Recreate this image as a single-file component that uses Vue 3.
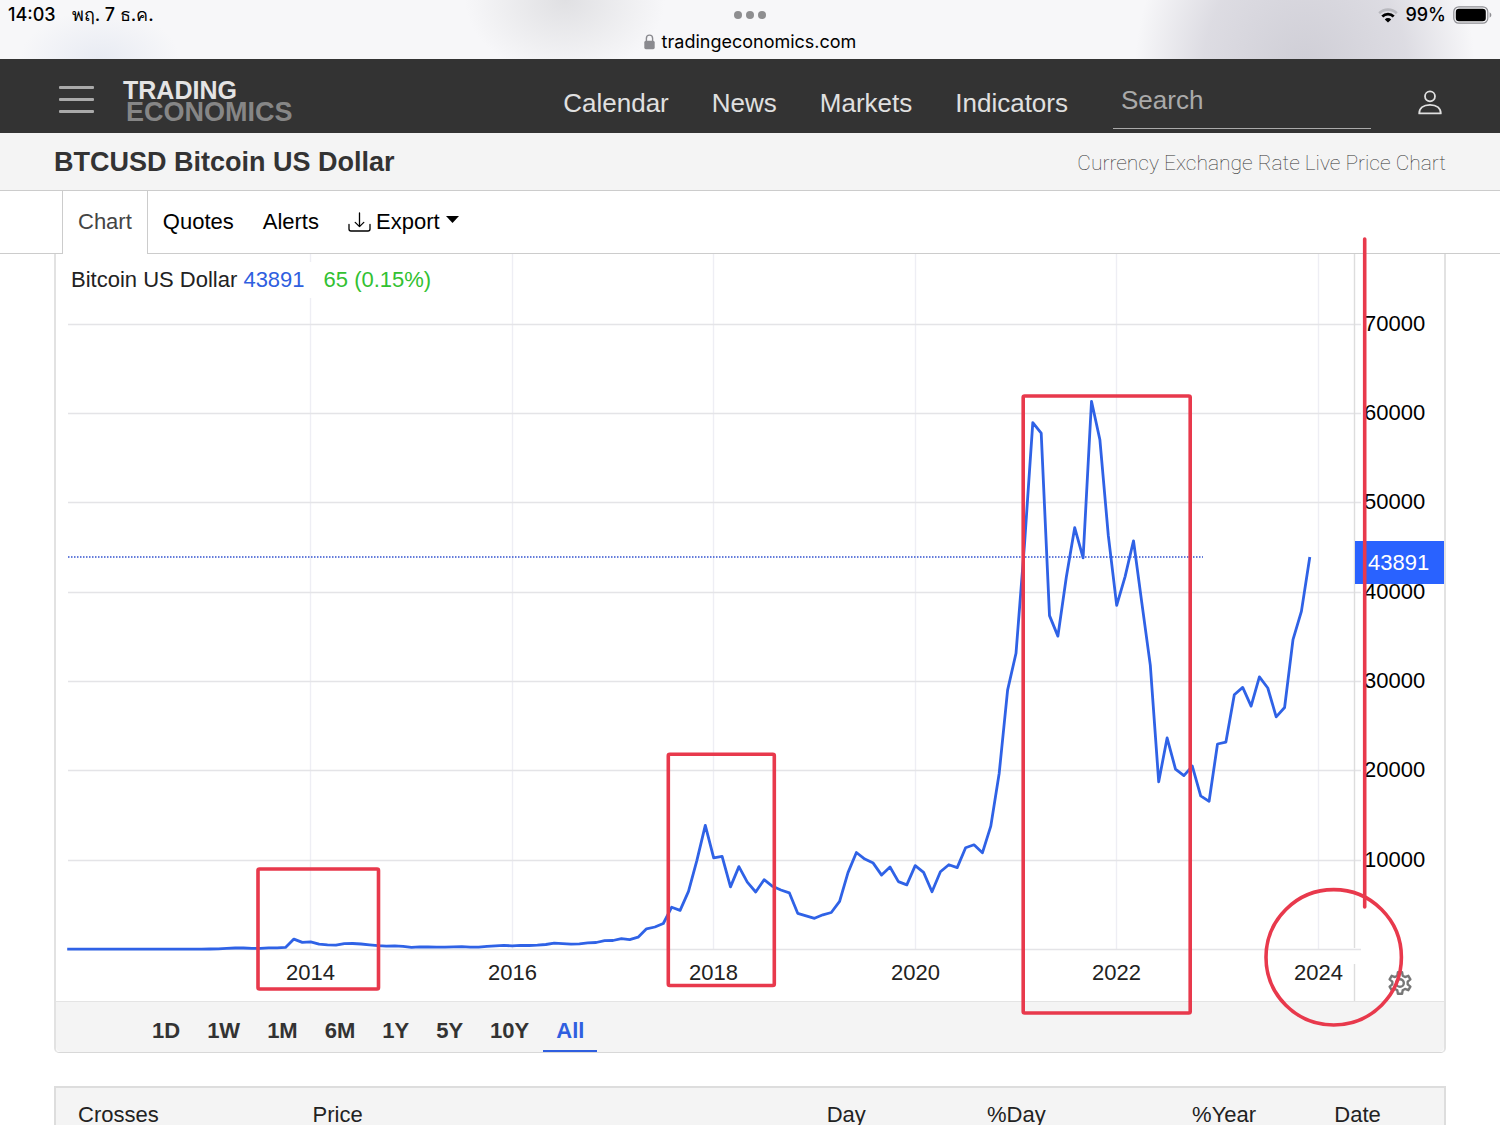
<template>
  <div class="page">
    <!-- Device status -->
    <div class="status">
      <div class="status-row">
        <div class="status-left">
          <span>14:03</span>
          <span>พฤ. 7 ธ.ค.</span>
        </div>
        <div class="dots"><i></i><i></i><i></i></div>
        <div class="status-right">
          <svg width="20" height="15" viewBox="0 0 20 15" fill="none">
            <path d="M1.2 5.2a12.6 12.6 0 0 1 17.6 0" stroke="#b9b9bf" stroke-width="2.6"/>
            <path d="M4.3 8.4a8.2 8.2 0 0 1 11.4 0" stroke="#000" stroke-width="2.8"/>
            <path d="M10 14.6l-3.2-3.2a4.6 4.6 0 0 1 6.4 0z" fill="#000"/>
          </svg>
          <span>99%</span>
          <svg width="39" height="18" viewBox="0 0 39 18">
            <rect x=".8" y=".8" width="34" height="16.4" rx="5" fill="none" stroke="#8e8e93" stroke-width="1.2"/>
            <rect x="2.8" y="2.8" width="30" height="12.4" rx="3.2" fill="#000"/>
            <path d="M36.6 6.2q1.8 1 1.8 2.8t-1.8 2.8z" fill="#8e8e93"/>
          </svg>
        </div>
      </div>
      <div class="address">
        <svg width="11" height="16" viewBox="0 0 11 16">
          <path d="M2.4 7.5V4.2a3.1 3.1 0 0 1 6.2 0v3.3" fill="none" stroke="#8a8a8f" stroke-width="1.4"/>
          <rect x=".3" y="6.8" width="10.4" height="8.4" rx="1.6" fill="#8a8a8f"/>
        </svg>
        <span>tradingeconomics.com</span>
      </div>
    </div>

    <!-- Site header -->
    <header class="header">
      <button class="menu-btn" aria-label="Menu"><i></i><i></i><i></i></button>
      <a class="logo" href="#">
        <span class="logo-top">TRADING</span>
        <span class="logo-bottom">ECONOMICS</span>
      </a>
      <nav class="nav">
        <a v-for="link in links" :key="link" href="#">{{ link }}</a>
      </nav>
      <input class="search" type="text" placeholder="Search" aria-label="Search">
      <button class="user-btn" aria-label="Account">
        <svg width="24" height="25" viewBox="0 0 24 25" fill="none" stroke="#e0e0e0" stroke-width="1.8">
          <circle cx="12" cy="6.3" r="5"/>
          <path d="M1.2 23.4c0-5.2 4-8.6 10.8-8.6s10.8 3.4 10.8 8.6z" stroke-linejoin="round"/>
        </svg>
      </button>
    </header>

    <div class="title-bar">
      <h1>BTCUSD Bitcoin US Dollar</h1>
      <h2>Currency Exchange Rate Live Price Chart</h2>
    </div>

    <!-- Tabs -->
    <div class="tabs">
      <button class="tab active">Chart</button>
      <button class="tab">Quotes</button>
      <button class="tab">Alerts</button>
      <button class="tab">
        <svg class="export-icon" width="23" height="20" viewBox="0 0 23 20" fill="none" stroke="currentColor" stroke-width="1.3" stroke-linecap="round" stroke-linejoin="round">
          <path d="M1 12.5v4.5a2 2 0 0 0 2 2h17a2 2 0 0 0 2-2v-4.5"/>
          <path d="M11.5 1v13.5M7.2 10.4l4.3 4.2 4.3-4.2"/>
        </svg>
        Export
        <svg class="caret" width="13" height="7" viewBox="0 0 13 7"><path d="M0 0h13L6.5 7z"/></svg>
      </button>
    </div>

    <main class="content">
      <section class="card">
        <div class="plot">
          <svg class="chart" viewBox="0 0 1388 747">
            <line v-for="g in years" :key="g.year" class="grid-v" :x1="g.x" :x2="g.x" y1="0" y2="695"/>
            <g v-for="g in prices" :key="g.value">
              <line class="grid-h" x1="12" x2="1305" :y1="g.y" :y2="g.y"/>
              <text v-if="g.value" class="price" x="1308" :y="g.y + 6.5">{{ g.value }}</text>
            </g>
            <path class="axis" d="M1298.5 0V694M1298.5 710V747"/>
            <line class="last-line" x1="12" x2="1147" y1="303" y2="303"/>
            <polyline class="series" :points="points"/>
            <text v-for="g in years" :key="g.year" class="year" :x="g.x" y="726">{{ g.year }}</text>
            <rect x="1299" y="287" width="89" height="43" fill="#2962ff"/>
            <text class="tag" x="1312" y="316">43891</text>
          </svg>
          <div class="legend">
            Bitcoin US Dollar <span class="last">43891</span><span class="change">65 (0.15%)</span>
          </div>
          <button class="gear" aria-label="Chart settings">
            <svg width="26" height="26" viewBox="0 0 26 26" fill="none" stroke="#777" stroke-width="2.4" stroke-linejoin="round">
              <path :d="gearPath"/>
              <circle cx="13" cy="13" r="3.8"/>
            </svg>
          </button>
          <!-- Hand-drawn marks -->
          <svg class="marks" viewBox="0 0 1388 747">
            <rect x="202" y="615" width="120.5" height="120" rx="1.5"/>
            <rect x="612.3" y="500.3" width="106" height="231.2" rx="1.5"/>
            <rect x="967.2" y="142" width="167" height="617" rx="1.5"/>
            <line x1="1308.7" x2="1308.7" y1="-15" y2="653"/>
            <circle cx="1277.7" cy="703.3" r="67.7"/>
          </svg>
        </div>
        <div class="ranges">
          <button v-for="r in ranges" :key="r" :class="{ active: r === range }" @click="range = r">{{ r }}</button>
        </div>
      </section>

      <table class="crosses">
        <thead>
          <tr>
            <th>Crosses</th>
            <th>Price</th>
            <th>Day</th>
            <th>%Day</th>
            <th>%Year</th>
            <th>Date</th>
          </tr>
        </thead>
      </table>
    </main>
  </div>
</template>

<script setup>
import { ref } from 'vue'

const links = ['Calendar', 'News', 'Markets', 'Indicators']
const ranges = ['1D', '1W', '1M', '6M', '1Y', '5Y', '10Y', 'All']
const range = ref('All')

// Monthly closes, August 2011 to December 2023
const closes = [
  8, 5, 3, 3, 5,
  5, 5, 5, 5, 5, 7, 9, 10, 12, 11, 13, 14,
  20, 33, 93, 139, 129, 97, 106, 141, 141, 204, 1132, 757,
  830, 570, 480, 448, 625, 640, 583, 478, 387, 338, 378, 320,
  217, 254, 244, 236, 230, 263, 284, 230, 236, 314, 377, 430,
  369, 437, 416, 448, 531, 673, 624, 575, 609, 700, 745, 963,
  970, 1180, 1071, 1348, 2286, 2480, 2875, 4703, 4338, 6468, 9950, 13850,
  10221, 10397, 6973, 9240, 7494, 6404, 7780, 7037, 6625, 6317, 4017, 3742,
  3457, 3854, 4105, 5350, 8574, 10817, 10085, 9630, 8293, 9199, 7569, 7193,
  9350, 8599, 6438, 8658, 9461, 9137, 11351, 11680, 10784, 13781, 19695, 28990,
  33114, 45137, 58918, 57750, 37332, 35040, 41626, 47166, 43790, 61318, 57005, 46306,
  38483, 41700, 45700, 38700, 31792, 18731, 23650, 20150, 19431, 20495, 17168, 16547,
  22960, 23180, 28480, 29300, 27200, 30470, 29230, 26000, 27050, 34650, 37800, 43891
]

const MONTH = 8.396
const xAt = (month) => 254.7 + month * MONTH
const yAt = (value) => 695.2 - value * 0.008936

const points = closes.map((v, i) => `${xAt(i - 29).toFixed(1)},${yAt(v).toFixed(1)}`).join(' ')
const years = [2014, 2016, 2018, 2020, 2022, 2024].map((year) => ({ year, x: Math.floor(xAt((year - 2014) * 12)) + 0.5 }))
const prices = [70000, 60000, 50000, 40000, 30000, 20000, 10000, 0].map((value) => ({ value, y: Math.floor(yAt(value) + 0.4) + 0.5 }))

// Six-toothed gear outline
const gearPath = Array.from({ length: 6 }, (_, i) => {
  const at = (r, deg) => {
    const a = ((i * 60 + deg) * Math.PI) / 180
    return `${(13 + r * Math.cos(a)).toFixed(2)} ${(13 + r * Math.sin(a)).toFixed(2)}`
  }
  return `${i ? 'L' : 'M'}${at(7.8, 10)}L${at(11, 19)}L${at(11, 41)}L${at(7.8, 50)}`
}).join('') + 'z'
</script>

<style>
body {
  background: #fff;
}
</style>

<style scoped>
.page {
  font-family: "Liberation Sans", Arial, sans-serif;
  font-size: 22px;
  color: #222;
}

button {
  font: inherit;
  color: inherit;
  background: none;
  border: none;
  padding: 0;
  cursor: pointer;
}

a {
  color: inherit;
  text-decoration: none;
}

svg {
  display: block;
}

/* Status */
.status {
  height: 59px;
  font-family: Inter, "Noto Sans", sans-serif;
  color: #000;
  background:
    radial-gradient(ellipse 100px 75px at 565px 0, rgba(220, 220, 223, 0.85), rgba(247, 247, 249, 0)),
    radial-gradient(ellipse 80px 50px at 100px 60px, rgba(228, 232, 241, 0.8), rgba(247, 247, 249, 0)),
    radial-gradient(ellipse 170px 200px at 87% 70px, #cfced6, rgba(218, 217, 224, 0.9) 60%, rgba(247, 247, 249, 0)),
    #f7f7f9;
}

.status-row {
  display: grid;
  grid-template-columns: 1fr auto 1fr;
  align-items: center;
  height: 30px;
  padding: 0 8px;
  font-size: 18px;
  line-height: 24px;
  font-weight: 500;
}

.status-left {
  display: flex;
  align-items: baseline;
  gap: 16px;
}

.status-right {
  display: flex;
  align-items: center;
  justify-content: flex-end;
  gap: 7px;
}

.dots {
  display: flex;
  gap: 4px;
}

.dots i {
  width: 8px;
  height: 8px;
  border-radius: 50%;
  background: #8e8e90;
}

.address {
  display: flex;
  align-items: center;
  justify-content: center;
  gap: 7px;
  height: 23px;
  font-size: 18px;
}

/* Header */
.header {
  display: flex;
  align-items: center;
  height: 74px;
  padding: 0 58px 0 59px;
  background: #333;
  color: #e0e0e0;
}

.menu-btn {
  display: flex;
  flex-direction: column;
  gap: 9px;
  width: 35px;
  margin-top: 6px;
}

.menu-btn i {
  height: 3px;
  border-radius: 1px;
  background: #aaa;
}

.logo {
  display: flex;
  flex-direction: column;
  margin: 10px 0 0 29px;
  font-weight: bold;
}

.logo-top {
  font-size: 25px;
  line-height: 21px;
  color: #e4e4e4;
}

.logo-bottom {
  padding-left: 3px;
  font-size: 27px;
  line-height: 22px;
  color: #868686;
}

.nav {
  display: flex;
  gap: 43px;
  margin: 14px 45px 0 auto;
  font-size: 26px;
}

.search {
  box-sizing: border-box;
  width: 258px;
  height: 56px;
  margin-top: 10px;
  padding: 0 8px;
  font: inherit;
  font-size: 26px;
  color: #ddd;
  background: none;
  border: none;
  border-bottom: 1px solid #aaa;
  outline: none;
}

.search::placeholder {
  color: #aaa;
  opacity: 1;
}

.user-btn {
  margin: 12px 0 0 47px;
}

/* Title */
.title-bar {
  display: flex;
  align-items: center;
  justify-content: space-between;
  box-sizing: border-box;
  height: 58px;
  padding: 2px 54px 0;
  background: #f4f4f4;
  border-bottom: 1px solid #ccc;
}

.title-bar h1 {
  margin: 0;
  font-size: 27px;
  color: #333;
}

.title-bar h2 {
  margin: 0;
  font-family: Roboto, Inter, sans-serif;
  font-size: 21px;
  font-weight: 100;
  color: #333;
}

/* Tabs */
.tabs {
  display: flex;
  height: 62px;
  padding-left: 62px;
  border-bottom: 1px solid #ccc;
  color: #000;
}

.tab {
  display: flex;
  align-items: center;
  padding: 0 14px 0 15px;
}

.tab.active {
  height: 63px;
  padding: 0 15px 1px;
  background: #fff;
  border: solid #ccc;
  border-width: 0 1px;
  color: #444;
  position: relative;
  z-index: 1;
}

.export-icon {
  margin-right: 5px;
}

.caret {
  margin: 0 0 5px 6px;
}

/* Chart */
.content {
  padding: 0 54px;
}

.card {
  border: 2px solid #e2e2e2;
  border-top: none;
  border-bottom: 1px solid #d8d8d8;
  border-radius: 0 0 5px 5px;
}

.plot {
  position: relative;
}

.chart {
  width: 100%;
  height: auto;
  font-size: 22px;
}

.grid-v {
  stroke: #eeeef4;
  stroke-width: 1.4;
}

.grid-h {
  stroke: #e4e4e7;
  stroke-width: 1.4;
}

.axis {
  fill: none;
  stroke: #ddd;
  stroke-width: 1.4;
}

.price {
  fill: #000;
}

.year {
  fill: #222;
  text-anchor: middle;
}

.tag {
  fill: #fff;
}

.last-line {
  stroke: #3353d0;
  stroke-width: 1.5;
  stroke-dasharray: 1.5 1.5;
}

.series {
  fill: none;
  stroke: #2f62e6;
  stroke-width: 2.8;
  stroke-linejoin: round;
}

.legend {
  position: absolute;
  top: 8px;
  left: 15px;
  height: 36px;
  line-height: 36px;
  background: #fff;
}

.last {
  color: #2f5fe0;
}

.change {
  margin-left: 19px;
  color: #32c132;
}

.gear {
  position: absolute;
  right: 31px;
  bottom: 5px;
}

.marks {
  position: absolute;
  inset: 0;
  z-index: 2;
  width: 100%;
  height: 100%;
  overflow: visible;
  pointer-events: none;
  fill: none;
  stroke: #e8394c;
  stroke-width: 3.6;
  stroke-linecap: round;
}

/* Ranges */
.ranges {
  display: flex;
  gap: 1px;
  height: 50px;
  padding-left: 83px;
  background: #f4f4f4;
  border-top: 1px solid #e4e4e4;
  border-radius: 0 0 5px 5px;
  font-weight: bold;
  color: #333;
}

.ranges button {
  padding: 10px 13px 0;
  border-bottom: 2px solid transparent;
}

.ranges button.active {
  color: #2f5fe0;
  border-color: #2f5fe0;
}

/* Crosses */
.crosses {
  width: 100%;
  margin-top: 33px;
  border: 2px solid #ddd;
  border-bottom: none;
  border-collapse: separate;
  border-spacing: 0;
  table-layout: fixed;
  background: #f4f4f4;
}

.crosses th {
  height: 53px;
  padding: 0 15px;
  font-weight: normal;
  text-align: right;
}

.crosses th:nth-child(1) {
  width: 17.4%;
  padding-left: 22px;
  box-sizing: border-box;
  text-align: left;
}

.crosses th:nth-child(2) {
  width: 16%;
  text-align: left;
}

.crosses th:nth-child(3) {
  width: 21.7%;
}

.crosses th:nth-child(4) {
  width: 10.8%;
}

.crosses th:nth-child(5) {
  width: 13%;
}

.crosses th:last-child {
  text-align: center;
}
</style>
